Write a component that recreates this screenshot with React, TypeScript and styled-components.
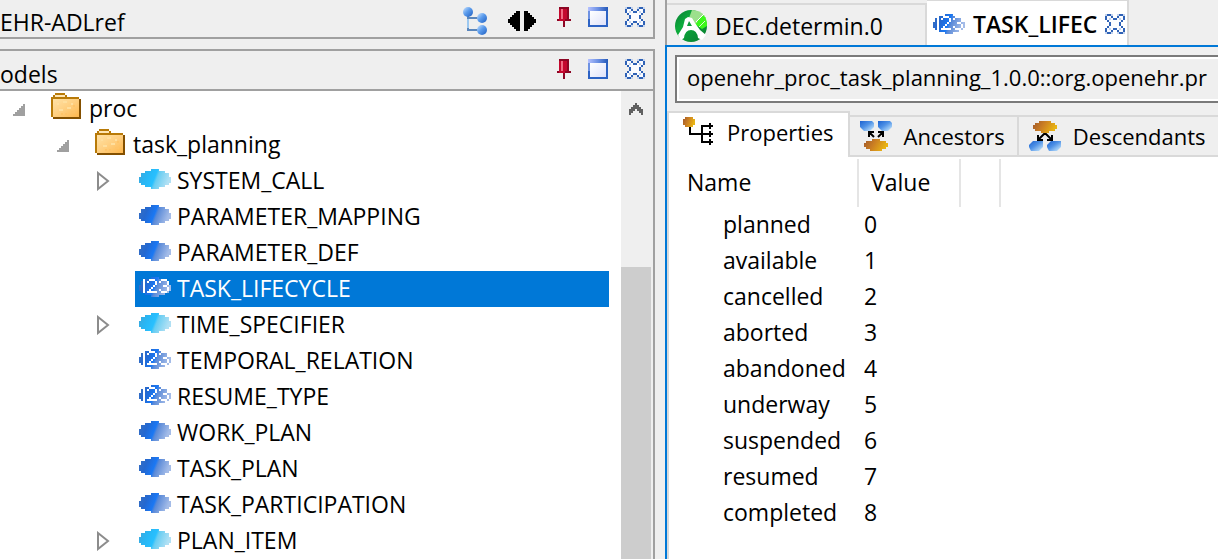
import React from "react";
import styled, { createGlobalStyle, css } from "styled-components";

const GlobalStyle = createGlobalStyle`
  * { box-sizing: border-box; }
  body {
    margin: 0;
    background: #efefef;
    color: #000;
    font-family: "Open Sans", "Noto Sans", sans-serif;
    font-size: 23px;
    line-height: 34px;
  }
  button, input { font: inherit; color: inherit; }
`;

/* ---------- icons ---------- */

const Svg = styled.svg`
  display: block;
  flex: none;
`;

const DefsSvg = styled.svg`
  position: absolute;
`;

const IconDefs = () => (
  <DefsSvg width="0" height="0" aria-hidden="true">
    <defs>
      <linearGradient id="blue" x1="0" y1="0" x2="1" y2="0.25">
        <stop offset="0" stopColor="#3a70c0" />
        <stop offset="0.3" stopColor="#2468d0" />
        <stop offset="0.56" stopColor="#1a78f4" />
        <stop offset="0.64" stopColor="#5a8ad8" />
        <stop offset="1" stopColor="#a4bce8" />
      </linearGradient>
      <linearGradient id="cyan" x1="0" y1="0" x2="1" y2="0.25">
        <stop offset="0" stopColor="#3fa6d8" />
        <stop offset="0.3" stopColor="#28b6f4" />
        <stop offset="0.56" stopColor="#28c0ff" />
        <stop offset="0.64" stopColor="#68cdf2" />
        <stop offset="1" stopColor="#b0e0f4" />
      </linearGradient>
      <linearGradient id="ball" x1="0" y1="0" x2="1" y2="1">
        <stop offset="0" stopColor="#1c62d0" />
        <stop offset="0.45" stopColor="#4f92e6" />
        <stop offset="1" stopColor="#d4f0ff" />
      </linearGradient>
      <linearGradient id="ballUp" x1="0" y1="0" x2="1" y2="1">
        <stop offset="0" stopColor="#cfe6ff" />
        <stop offset="0.45" stopColor="#5c9cec" />
        <stop offset="1" stopColor="#1c5cc0" />
      </linearGradient>
      <linearGradient id="amber" x1="0" y1="0" x2="1" y2="0.3">
        <stop offset="0" stopColor="#a0582c" />
        <stop offset="0.5" stopColor="#cc8022" />
        <stop offset="1" stopColor="#e8b414" />
      </linearGradient>
      <linearGradient id="folder" x1="0" y1="0" x2="1" y2="1">
        <stop offset="0" stopColor="#ffe2a6" />
        <stop offset="0.5" stopColor="#ffcf80" />
        <stop offset="1" stopColor="#ffb84e" />
      </linearGradient>
      <linearGradient id="titlebar" x1="0" y1="0" x2="1" y2="0">
        <stop offset="0" stopColor="#b4c0ff" />
        <stop offset="0.5" stopColor="#6c90e4" />
        <stop offset="1" stopColor="#2458b8" />
      </linearGradient>
      <linearGradient id="pane" x1="0" y1="0" x2="1" y2="1">
        <stop offset="0" stopColor="#ffffff" />
        <stop offset="1" stopColor="#dfe2fa" />
      </linearGradient>
      <linearGradient id="green" x1="0" y1="0" x2="1" y2="1">
        <stop offset="0" stopColor="#0a7a34" />
        <stop offset="0.35" stopColor="#0cac3c" />
        <stop offset="1" stopColor="#0a7a30" />
      </linearGradient>
    </defs>
  </DefsSvg>
);

const OVAL =
  "M12 0H20V2H26V4H30V8H32V14H30V16H26V18H20V20H12V18H6V16H2V14H0V8H2V4H6V2H12Z";

const ClassIcon = ({ tone }: { tone: "blue" | "cyan" }) => (
  <Svg width="32" height="20" viewBox="0 0 32 20" shapeRendering="crispEdges" aria-hidden="true">
    <path d={OVAL} fill={`url(#${tone})`} />
  </Svg>
);

const EnumIcon = () => (
  <Svg width="32" height="20" viewBox="0 0 32 20" aria-hidden="true">
    <path d={OVAL} fill="url(#blue)" shapeRendering="crispEdges" />
    <g fill="#fff" shapeRendering="crispEdges">
      <path d="M4 2H6V16H4Z" />
      <path d="M8 4H10V2H16V4H18V8H16V10H14V12H12V14H18V16H8V14H10V12H12V10H14V8H16V4H10V6H8Z" />
      <path d="M20 4H22V2H28V4H30V8H28V10H30V14H28V16H22V14H20V12H22V14H28V10H24V8H28V4H22V6H20Z" />
    </g>
  </Svg>
);

const FolderIcon = () => (
  <Svg width="30" height="26" viewBox="0 0 30 26" shapeRendering="crispEdges" aria-hidden="true">
    <path d="M4 0H14V2H16V4H28V6H30V26H2V24H0V4H2V2H4Z" fill="#b87a08" />
    <path d="M4 2H14V4H4Z" fill="#ffe6b4" />
    <path d="M2 6H28V24H2Z" fill="url(#folder)" />
    <path d="M28 6H30V26H2V24H28Z" fill="#845000" />
    <path d="M6 10h2v2h-2zM12 8h4v2h-4zM8 16h4v2h-4zM16 14h4v2h-4zM20 10h2v2h-2z" fill="#ffdf9e" />
    <path d="M22 12h2v2h-2zM14 20h2v2h-2zM20 18h4v2h-4zM24 16h2v2h-2zM10 20h2v2h-2z" fill="#ffc468" />
  </Svg>
);

const HierarchyIcon = () => (
  <Svg width="24" height="28" viewBox="0 0 24 28" aria-hidden="true">
    <path d="M5 8V23H16M5 11H16" fill="none" stroke="#5a86bc" strokeWidth="2" shapeRendering="crispEdges" />
    <path d="M5 12V21" stroke="#9cc8f0" strokeWidth="2" shapeRendering="crispEdges" />
    <circle cx="5" cy="5" r="5" fill="url(#ballUp)" />
    <circle cx="19" cy="11" r="5" fill="url(#ballUp)" />
    <circle cx="19" cy="23" r="5" fill="url(#ballUp)" />
  </Svg>
);

const SplitIcon = () => (
  <Svg width="28" height="24" viewBox="0 -4 28 24" shapeRendering="crispEdges" aria-hidden="true">
    <path d="M12 0V20H8V18H6V16H4V14H2V12H0V8H2V6H4V4H6V2H8V0Z" />
    <path d="M16 0V20H20V18H22V16H24V14H26V12H28V8H26V6H24V4H22V2H20V0Z" />
  </Svg>
);

const PinIcon = () => (
  <Svg width="14" height="20" viewBox="0 0 14 20" shapeRendering="crispEdges" aria-hidden="true">
    <path d="M2 0H12V12H14V14H0V12H2Z" fill="#c4082e" />
    <path d="M4 2H6V12H4Z" fill="#f06c84" />
    <path d="M2 0H12V2H2ZM10 2H12V12H10ZM0 12H2V14H0ZM8 12H14V14H8Z" fill="#8c0624" />
    <path d="M6 14H8V20H6Z" fill="#8c0624" />
  </Svg>
);

const WindowIcon = () => (
  <Svg width="20" height="20" viewBox="0 0 20 20" shapeRendering="crispEdges" aria-hidden="true">
    <path d="M0 0H20V20H0Z" fill="#2c62c4" />
    <path d="M0 0H20V4H0Z" fill="url(#titlebar)" />
    <path d="M0 4H2V12H0Z" fill="#6e92e2" />
    <path d="M2 4H18V18H2Z" fill="url(#pane)" />
  </Svg>
);

const CloseIcon = () => (
  <Svg width="20" height="20" viewBox="0 0 20 20" shapeRendering="crispEdges" aria-hidden="true">
    <path
      d="M2 0H6V2H8V4H12V2H14V0H18V2H20V6H18V8H16V12H18V14H20V18H18V20H14V18H12V16H8V18H6V20H2V18H0V14H2V12H4V8H2V6H0V2H2Z"
      fill="#2f62b6"
    />
    <path
      d="M2 2H6V4H8V6H12V4H14V2H18V6H16V8H14V12H16V14H18V18H14V16H12V14H8V16H6V18H2V14H4V12H6V8H4V6H2Z"
      fill="#fbfcff"
    />
    <path
      d="M0 0h2v2h-2zM18 0h2v2h-2zM0 18h2v2h-2zM18 18h2v2h-2zM6 0h2v2h-2zM12 0h2v2h-2zM6 18h2v2h-2zM12 18h2v2h-2zM4 4h2v2h-2zM14 4h2v2h-2zM4 14h2v2h-2zM14 14h2v2h-2z"
      fill="#c4d4ee"
    />
  </Svg>
);

const ArchetypeIcon = () => (
  <Svg width="32" height="32" viewBox="0 0 32 32" aria-hidden="true">
    <circle cx="16" cy="16" r="16" fill="url(#green)" />
    <path d="M17 0Q25 0 30 6L21 15L14 8Z" fill="#9ce08c" />
    <path d="M30 7A16 16 0 0 1 32 16L27 19L20 14Z" fill="#3cf81c" />
    <path d="M22 11L28 5L31 8L24 15Z" fill="#3cf81c" />
    <path d="M13 7L17 8L20 13L25 20L31 25L27 30L23 28Q22 20 16 20Q10 20 9 28L6 30L3 25L8 17L10 9Z" fill="#fff" />
    <path d="M14 11L17 16H12Z" fill="#0c9c38" />
    <path d="M21 12L29 4" fill="none" stroke="#fff" strokeWidth="1" />
    <path d="M24 17L30 11" fill="none" stroke="#dcf8d4" strokeWidth="1" />
  </Svg>
);

const PropertiesIcon = () => (
  <Svg width="32" height="28" viewBox="0 0 32 28" aria-hidden="true">
    <path d="M2 0H10V2H12V8H10V10H2V8H0V2H2Z" fill="url(#amber)" shapeRendering="crispEdges" />
    <path
      d="M7 10V17H28M19 8V26M18 9H30M18 25H30M27 6V12M27 14V20M27 22V28M28 17H30"
      fill="none"
      stroke="#000"
      strokeWidth="2"
      shapeRendering="crispEdges"
    />
  </Svg>
);

const AncestorsIcon = () => (
  <Svg width="32" height="30" viewBox="0 0 32 30" aria-hidden="true">
    <path d="M0 0H12L14 2V6L10 10H4L0 6Z" fill="url(#ball)" />
    <path d="M18 0H30L32 2V6L28 10H22L18 6Z" fill="url(#ball)" />
    <path
      d="M12 18H20V20H26V22H28V26H26V28H22V30H10V28H6V26H4V22H6V20H12Z"
      fill="url(#amber)"
      shapeRendering="crispEdges"
    />
    <path d="M9 16V11H14M10 12L14 16M23 16V11H18M22 12L18 16" fill="none" stroke="#000" strokeWidth="2" />
  </Svg>
);

const DescendantsIcon = () => (
  <Svg width="32" height="30" viewBox="0 0 32 30" aria-hidden="true">
    <path
      d="M10 0H22V2H26V4H28V8H26V10H20V12H12V10H6V8H4V4H6V2H10Z"
      fill="url(#amber)"
      shapeRendering="crispEdges"
    />
    <path d="M4 20H14V26L10 30H2L0 26V24Z" fill="url(#ball)" />
    <path d="M22 20H32V26L28 30H20L18 26V24Z" fill="url(#ball)" />
    <path d="M9 14V19H14M10 18L15 13H17L22 18M23 14V19H18" fill="none" stroke="#000" strokeWidth="2" />
  </Svg>
);

const ExpanderIcon = ({ open }: { open: boolean }) => (
  <Svg width="16" height="20" viewBox="0 0 16 20" aria-hidden="true">
    {open ? (
      <path d="M16 5V17H4V15H6V13H8V11H10V9H12V7H14V5Z" fill="#a0a0a0" shapeRendering="crispEdges" />
    ) : (
      <path d="M1 2L11 10L1 18Z" fill="#fff" stroke="#8c8c8c" strokeWidth="2" />
    )}
  </Svg>
);

const ChevronUp = () => (
  <Svg width="14" height="12" viewBox="0 0 14 12" shapeRendering="crispEdges" aria-hidden="true">
    <path d="M6 0H8V2H10V4H12V6H14V12H12V10H10V8H8V6H6V8H4V10H2V12H0V6H2V4H4V2H6Z" fill="#606060" />
  </Svg>
);

/* ---------- layout ---------- */

const Page = styled.main`
  display: grid;
  grid-template-columns: minmax(0, 655fr) minmax(0, 553fr);
  column-gap: 10px;
  min-height: 100vh;
  overflow: hidden;
`;

const LeftColumn = styled.div`
  display: flex;
  flex-direction: column;
  gap: 10px;
  margin-top: -3px;
`;

const Panel = styled.section<{ $grow?: boolean }>`
  display: flex;
  flex-direction: column;
  flex: ${(p) => (p.$grow ? "1" : "none")};
  border: 2px solid #a0a0a0;
  border-left: 0;
  ${(p) => p.$grow && css`border-bottom: 0;`}
`;

const PanelBar = styled.header`
  display: flex;
  justify-content: space-between;
  height: 38px;
  padding-right: 8px;
`;

const PanelTitle = styled.h2`
  margin: 0;
  padding-top: 6px;
  font-size: 23px;
  font-weight: 400;
  line-height: 34px;
`;

const Tools = styled.div`
  display: flex;
  align-items: flex-start;
  gap: 21px;
  padding-top: 8px;
`;

const WindowGroup = styled.div`
  display: flex;
  gap: 17px;
`;

const IconButton = styled.button`
  display: block;
  padding: 0;
  border: 0;
  background: none;
`;

const TreeArea = styled.div`
  display: flex;
  flex: 1;
  border-top: 2px solid #a0a0a0;
`;

const Tree = styled.ul`
  flex: 1;
  min-width: 0;
  margin: 0;
  padding: 0 12px 0 0;
  list-style: none;
  background: #fff;
`;

const TreeRow = styled.li<{ $level: number }>`
  display: flex;
  align-items: center;
  gap: 22px;
  height: 36px;
  padding-left: ${(p) => 9 + p.$level * 44}px;
`;

const Expander = styled(IconButton)`
  width: 16px;
  height: 20px;
`;

const ExpanderSpace = styled.span`
  width: 16px;
`;

const Node = styled.div<{ $selected?: boolean }>`
  display: flex;
  flex: 1;
  align-items: flex-start;
  gap: 6px;
  height: 36px;
  padding-left: 4px;
  white-space: nowrap;
  background: ${(p) => (p.$selected ? "#0078d7" : "transparent")};
  color: ${(p) => (p.$selected ? "#fff" : "#000")};
`;

const NodeIcon = styled.span<{ $folder?: boolean }>`
  width: 32px;
  padding-top: ${(p) => (p.$folder ? 2 : 6)}px;
`;

const ScrollBar = styled.div`
  display: flex;
  flex-direction: column;
  width: 32px;
  padding-right: 2px;
`;

const ScrollUp = styled(IconButton)`
  display: flex;
  align-items: center;
  justify-content: center;
  height: 36px;
`;

const ScrollTrack = styled.div`
  flex: 1;
  padding-top: 140px;
`;

const ScrollThumb = styled.div`
  height: 100%;
  background: #cdcdcd;
`;

const RightColumn = styled.div`
  display: flex;
  flex-direction: column;
`;

const EditorTabs = styled.div`
  display: flex;
  align-items: flex-end;
  height: 45px;
  border-left: 2px solid #a0a0a0;
`;

const EditorTab = styled.div<{ $active?: boolean }>`
  display: flex;
  align-items: center;
  gap: 8px;
  height: ${(p) => (p.$active ? 45 : 42)}px;
  padding: ${(p) => (p.$active ? "2px 2px 0 6px" : "2px 42px 0 8px")};
  border-top: ${(p) => (p.$active ? 1 : 2)}px solid #d9d9d9;
  border-right: 2px solid #d9d9d9;
  background: ${(p) => (p.$active ? "#fff" : "#efefef")};
`;

const EditorTabLabel = styled.button<{ $active?: boolean }>`
  display: flex;
  align-items: center;
  gap: 8px;
  padding: 0;
  border: 0;
  background: none;
  font-weight: ${(p) => (p.$active ? 600 : 400)};
  white-space: nowrap;
`;

const EditorBody = styled.div`
  display: flex;
  flex-direction: column;
  flex: 1;
  border-top: 2px solid #0078d7;
  border-left: 2px solid #0078d7;
`;

const PathField = styled.input`
  display: block;
  height: 48px;
  margin: 8px 0 8px 8px;
  padding: 0 0 4px 10px;
  border: 2px solid #7a7a7a;
  border-right: 0;
  border-radius: 0;
  background: #efefef;
  box-shadow: inset 2px 2px #fff, inset 0 -2px #fff;
  font-size: 22px;
  outline: 0;
`;

const ViewTabs = styled.div`
  display: flex;
  align-items: flex-end;
  height: 46px;
`;

const ViewTab = styled.button<{ $active?: boolean }>`
  display: flex;
  align-items: flex-start;
  gap: 12px;
  height: ${(p) => (p.$active ? 46 : 42)}px;
  padding: ${(p) => (p.$active ? "2px 14px 0 14px" : "2px 12px 0 10px")};
  border: 0 solid #d9d9d9;
  border-width: ${(p) => (p.$active ? "2px 2px 0 2px" : "2px 2px 2px 0")};
  background: ${(p) => (p.$active ? "#fff" : "#efefef")};
  font-size: 22px;
  white-space: nowrap;
`;

const ViewTabIcon = styled.span`
  padding-top: 2px;
`;

const ViewBody = styled.div`
  flex: 1;
  padding-top: 2px;
  border-left: 2px solid #d9d9d9;
  background: #fff;
`;

const Table = styled.table`
  border-collapse: collapse;
  table-layout: fixed;
  width: 331px;
`;

const HeadCell = styled.th<{ $width: number }>`
  width: ${(p) => p.$width}px;
  height: 48px;
  padding: 0 0 2px ${(p) => (p.$width > 150 ? 18 : 12)}px;
  border-right: 2px solid #e5e5e5;
  font-weight: 400;
  text-align: left;
`;

const Cell = styled.td<{ $indent: number }>`
  height: 36px;
  padding: 0 0 2px ${(p) => p.$indent}px;
  white-space: nowrap;
`;

/* ---------- data ---------- */

type Kind = "folder" | "blue" | "cyan" | "enum";

interface TreeItem {
  name: string;
  kind: Kind;
  level: number;
  open?: boolean;
}

const TREE: TreeItem[] = [
  { name: "proc", kind: "folder", level: 0, open: true },
  { name: "task_planning", kind: "folder", level: 1, open: true },
  { name: "SYSTEM_CALL", kind: "cyan", level: 2, open: false },
  { name: "PARAMETER_MAPPING", kind: "blue", level: 2 },
  { name: "PARAMETER_DEF", kind: "blue", level: 2 },
  { name: "TASK_LIFECYCLE", kind: "enum", level: 2 },
  { name: "TIME_SPECIFIER", kind: "cyan", level: 2, open: false },
  { name: "TEMPORAL_RELATION", kind: "enum", level: 2 },
  { name: "RESUME_TYPE", kind: "enum", level: 2 },
  { name: "WORK_PLAN", kind: "blue", level: 2 },
  { name: "TASK_PLAN", kind: "blue", level: 2 },
  { name: "TASK_PARTICIPATION", kind: "blue", level: 2 },
  { name: "PLAN_ITEM", kind: "cyan", level: 2, open: false },
];

const VALUES = [
  "planned",
  "available",
  "cancelled",
  "aborted",
  "abandoned",
  "underway",
  "suspended",
  "resumed",
  "completed",
];

const KindIcon = ({ kind }: { kind: Kind }) => {
  if (kind === "folder") return <FolderIcon />;
  if (kind === "enum") return <EnumIcon />;
  return <ClassIcon tone={kind} />;
};

const WindowTools = () => (
  <WindowGroup>
    <IconButton aria-label="Pin"><PinIcon /></IconButton>
    <IconButton aria-label="Maximize"><WindowIcon /></IconButton>
    <IconButton aria-label="Close"><CloseIcon /></IconButton>
  </WindowGroup>
);

export default function App() {
  const [selected, setSelected] = React.useState("TASK_LIFECYCLE");

  return (
    <Page>
      <GlobalStyle />
      <IconDefs />
      <LeftColumn>
        <Panel>
          <PanelBar>
            <PanelTitle>EHR-ADLref</PanelTitle>
            <Tools>
              <IconButton aria-label="Show hierarchy"><HierarchyIcon /></IconButton>
              <IconButton aria-label="Split"><SplitIcon /></IconButton>
              <WindowTools />
            </Tools>
          </PanelBar>
        </Panel>
        <Panel $grow>
          <PanelBar>
            <PanelTitle>odels</PanelTitle>
            <Tools>
              <WindowTools />
            </Tools>
          </PanelBar>
          <TreeArea>
            <Tree role="tree">
              {TREE.map((item) => (
                <TreeRow
                  key={item.name}
                  $level={item.level}
                  role="treeitem"
                  aria-selected={item.name === selected}
                  onClick={() => setSelected(item.name)}
                >
                  {item.open === undefined ? (
                    <ExpanderSpace />
                  ) : (
                    <Expander aria-label={item.open ? "Collapse" : "Expand"}>
                      <ExpanderIcon open={item.open} />
                    </Expander>
                  )}
                  <Node $selected={item.name === selected}>
                    <NodeIcon $folder={item.kind === "folder"}>
                      <KindIcon kind={item.kind} />
                    </NodeIcon>
                    {item.name}
                  </Node>
                </TreeRow>
              ))}
            </Tree>
            <ScrollBar>
              <ScrollUp aria-label="Scroll up"><ChevronUp /></ScrollUp>
              <ScrollTrack><ScrollThumb /></ScrollTrack>
            </ScrollBar>
          </TreeArea>
        </Panel>
      </LeftColumn>

      <RightColumn>
        <EditorTabs>
          <EditorTab>
            <EditorTabLabel><ArchetypeIcon />DEC.determin.0</EditorTabLabel>
          </EditorTab>
          <EditorTab $active>
            <EditorTabLabel $active><EnumIcon />TASK_LIFEC</EditorTabLabel>
            <IconButton aria-label="Close tab"><CloseIcon /></IconButton>
          </EditorTab>
        </EditorTabs>
        <EditorBody>
          <PathField
            aria-label="Class path"
            readOnly
            value="openehr_proc_task_planning_1.0.0::org.openehr.pr"
          />
          <ViewTabs>
            <ViewTab $active><ViewTabIcon><PropertiesIcon /></ViewTabIcon>Properties</ViewTab>
            <ViewTab><ViewTabIcon><AncestorsIcon /></ViewTabIcon>Ancestors</ViewTab>
            <ViewTab><ViewTabIcon><DescendantsIcon /></ViewTabIcon>Descendants</ViewTab>
          </ViewTabs>
          <ViewBody>
            <Table>
              <thead>
                <tr>
                  <HeadCell $width={189}>Name</HeadCell>
                  <HeadCell $width={102}>Value</HeadCell>
                  <HeadCell $width={40} aria-label="Empty column" />
                </tr>
              </thead>
              <tbody>
                {VALUES.map((name, i) => (
                  <tr key={name}>
                    <Cell $indent={54}>{name}</Cell>
                    <Cell $indent={6}>{i}</Cell>
                    <Cell $indent={0} />
                  </tr>
                ))}
              </tbody>
            </Table>
          </ViewBody>
        </EditorBody>
      </RightColumn>
    </Page>
  );
}
